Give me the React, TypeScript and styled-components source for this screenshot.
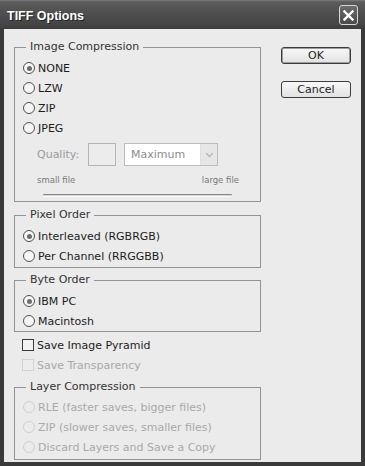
import React from "react";
import styled, { createGlobalStyle } from "styled-components";

const GlobalStyle = createGlobalStyle`
  html, body { margin: 0; padding: 0; background: #ebebeb; }
  body { font-family: "DejaVu Sans", "Liberation Sans", sans-serif; font-size: 11px; }
  * { box-sizing: border-box; }
`;

const Window = styled.div`
  width: 365px;
  height: 466px;
  display: flex;
  flex-direction: column;
  background: #3a3a3a;
`;

const TitleBar = styled.div`
  height: 29px;
  flex: none;
  display: flex;
  justify-content: space-between;
  padding: 0 7px 0 7px;
  background: linear-gradient(#7c7c7c 0px, #5c5c5c 2px, #505050 12px, #454545 24px, #3c3c3c 29px);
`;

const Title = styled.span`
  font-family: "Liberation Sans", Arial, sans-serif;
  font-weight: bold;
  font-size: 12.5px;
  color: #ffffff;
  line-height: 29px;
  padding-top: 2px;
  text-shadow: 1px 1px 0 #222;
`;

const CloseButton = styled.div`
  width: 19px;
  height: 20px;
  margin-top: 5px;
  border: 1px solid #d6d6d6;
  border-radius: 3px;
  background: linear-gradient(#6c6c6c, #4a4a4a);
  display: flex;
  align-items: center;
  justify-content: center;
`;

const Client = styled.div`
  flex: 1;
  margin: 0 4px 4px;
  background: #ebebeb;
  display: flex;
  padding: 11px 0 0 10px;
`;

const LeftColumn = styled.div`
  width: 247px;
  display: flex;
  flex-direction: column;
`;

const Group = styled.fieldset<{ $mt: number; $pt: number; $pb: number }>`
  margin: ${(p) => p.$mt}px 0 0;
  padding: ${(p) => p.$pt}px 0 ${(p) => p.$pb}px;
  border: 1px solid #939393;
  min-width: 0;
  display: flex;
  flex-direction: column;
`;

const Legend = styled.legend`
  margin-left: 11px;
  padding: 0 4px;
  font-size: 11px;
  line-height: 14px;
  color: #333333;
`;

const OptionRow = styled.label<{ $disabled?: boolean }>`
  height: 20px;
  display: flex;
  align-items: center;
  padding-left: 8px;
  font-size: 11px;
  color: ${(p) => (p.$disabled ? "#a9a9a9" : "#1c1c1c")};
  white-space: nowrap;
`;

const RadioCircle = styled.span<{ $disabled?: boolean }>`
  width: 12px;
  height: 12px;
  flex: none;
  border-radius: 50%;
  border: 1px solid ${(p) => (p.$disabled ? "#cfcfcf" : "#505050")};
  background: ${(p) => (p.$disabled ? "#ececec" : "#f6f6f6")};
  margin-right: 3px;
  display: inline-flex;
  align-items: center;
  justify-content: center;
`;

const RadioDot = styled.span`
  width: 5px;
  height: 5px;
  border-radius: 50%;
  background: #6e6e6e;
`;

const CheckBox = styled.span<{ $disabled?: boolean }>`
  width: 12px;
  height: 12px;
  flex: none;
  border: 1px solid ${(p) => (p.$disabled ? "#d2d2d2" : "#3a3a3a")};
  background: ${(p) => (p.$disabled ? "#ececec" : "#f2f2f2")};
  margin-right: 3px;
`;

const QualityRow = styled.div`
  margin-top: 5px;
  height: 23px;
  display: flex;
  align-items: center;
  padding-left: 22px;
`;

const QualityLabel = styled.span`
  width: 51px;
  color: #9a9a9a;
  font-size: 11px;
`;

const QualityBox = styled.div`
  width: 28px;
  height: 23px;
  border: 1px solid #b4b4b4;
  background: #ececec;
`;

const Select = styled.div`
  margin-left: 8px;
  width: 94px;
  height: 23px;
  border: 1px solid #bdbdbd;
  background: #ffffff;
  display: flex;
`;

const SelectText = styled.span`
  flex: 1;
  padding-left: 6px;
  line-height: 21px;
  color: #8c8c8c;
  font-size: 11px;
`;

const SelectArrow = styled.span`
  width: 17px;
  background: #e6e6e6;
  border-left: 1px solid #e0e0e0;
  display: flex;
  align-items: center;
  justify-content: center;
`;

const ScaleRow = styled.div`
  margin-top: 8px;
  display: flex;
  justify-content: space-between;
  padding: 0 21px 0 22px;
  font-size: 8.5px;
  line-height: 12px;
  color: #7a7a7a;
`;

const SliderTrack = styled.div`
  margin: 8px 0 0 28px;
  width: 189px;
  height: 3px;
  border-top: 1px solid #8a8a8a;
  border-bottom: 1px solid #ffffff;
  background: #d2d2d2;
  border-radius: 1px;
`;

const CheckList = styled.div`
  margin-top: 3px;
  display: flex;
  flex-direction: column;
`;

const RightColumn = styled.div`
  margin-left: 20px;
  padding-top: 7px;
  display: flex;
  flex-direction: column;
  gap: 17px;
`;

const Button = styled.button<{ $default?: boolean }>`
  width: 70px;
  height: 17px;
  padding: 0;
  border: 1px solid #3c3c3c;
  border-radius: 3px;
  background: linear-gradient(#f8f8f8, #e2e2e2);
  box-shadow: ${(p) => (p.$default ? "inset 0 0 0 1px #9c9c9c" : "none")};
  font-family: "DejaVu Sans", sans-serif;
  font-size: 11px;
  line-height: 15px;
  color: #1c1c1c;
`;

type Opt = { label: string; checked?: boolean };

const RadioGroup: React.FC<{ options: Opt[]; disabled?: boolean }> = ({ options, disabled }) => (
  <>
    {options.map((o) => (
      <OptionRow key={o.label} $disabled={disabled}>
        <RadioCircle $disabled={disabled}>{o.checked && <RadioDot />}</RadioCircle>
        {o.label}
      </OptionRow>
    ))}
  </>
);

export default function App() {
  return (
    <>
      <GlobalStyle />
      <Window>
        <TitleBar>
          <Title>TIFF Options</Title>
          <CloseButton>
            <svg width="11" height="11" viewBox="0 0 11 11">
              <path d="M1.5 1.5 L9.5 9.5 M9.5 1.5 L1.5 9.5" stroke="#ffffff" strokeWidth="2.4" strokeLinecap="square" />
            </svg>
          </CloseButton>
        </TitleBar>
        <Client>
          <LeftColumn>
            <Group $mt={0} $pt={4} $pb={4}>
              <Legend>Image Compression</Legend>
              <RadioGroup
                options={[{ label: "NONE", checked: true }, { label: "LZW" }, { label: "ZIP" }, { label: "JPEG" }]}
              />
              <QualityRow>
                <QualityLabel>Quality:</QualityLabel>
                <QualityBox />
                <Select>
                  <SelectText>Maximum</SelectText>
                  <SelectArrow>
                    <svg width="9" height="6" viewBox="0 0 9 6">
                      <path d="M1 1 L4.5 4.5 L8 1" stroke="#b8b8b8" strokeWidth="1.4" fill="none" />
                    </svg>
                  </SelectArrow>
                </Select>
              </QualityRow>
              <ScaleRow>
                <span>small file</span>
                <span>large file</span>
              </ScaleRow>
              <SliderTrack />
            </Group>
            <Group $mt={6} $pt={4} $pb={1}>
              <Legend>Pixel Order</Legend>
              <RadioGroup
                options={[{ label: "Interleaved (RGBRGB)", checked: true }, { label: "Per Channel (RRGGBB)" }]}
              />
            </Group>
            <Group $mt={5} $pt={4} $pb={0}>
              <Legend>Byte Order</Legend>
              <RadioGroup options={[{ label: "IBM PC", checked: true }, { label: "Macintosh" }]} />
            </Group>
            <CheckList>
              <OptionRow>
                <CheckBox />
                Save Image Pyramid
              </OptionRow>
              <OptionRow $disabled>
                <CheckBox $disabled />
                Save Transparency
              </OptionRow>
            </CheckList>
            <Group $mt={5} $pt={3} $pb={2}>
              <Legend>Layer Compression</Legend>
              <RadioGroup
                disabled
                options={[
                  { label: "RLE (faster saves, bigger files)" },
                  { label: "ZIP (slower saves, smaller files)" },
                  { label: "Discard Layers and Save a Copy" },
                ]}
              />
            </Group>
          </LeftColumn>
          <RightColumn>
            <Button $default>OK</Button>
            <Button>Cancel</Button>
          </RightColumn>
        </Client>
      </Window>
    </>
  );
}
